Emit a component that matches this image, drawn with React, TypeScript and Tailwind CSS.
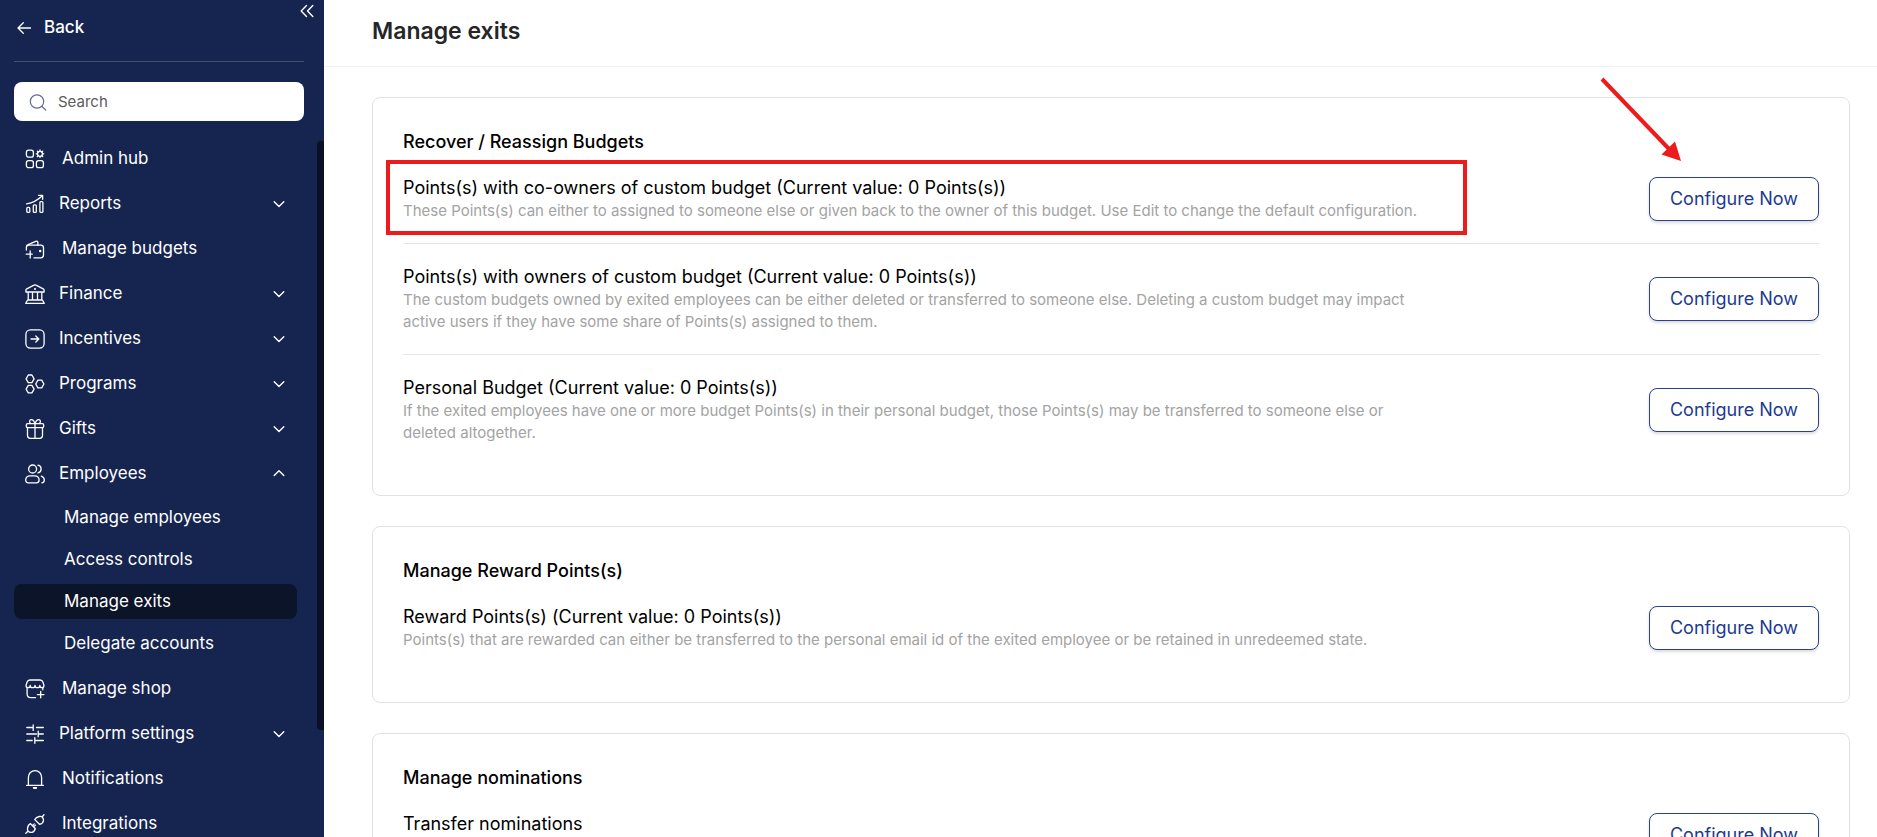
import { useState } from "react";
import type { ReactNode } from "react";
import { clsx } from "clsx";

type NavChild = { label: string; active?: boolean };
type NavItem = { label: string; icon: ReactNode; expandable?: boolean; children?: NavChild[] };
type BudgetRow = { title: string; description?: string; highlighted?: boolean };
type Section = { heading: string; rows: BudgetRow[] };

function Icon({ children }: { children: ReactNode }) {
  return (
    <svg
      viewBox="0 0 20 20"
      className="size-5 shrink-0 overflow-visible"
      fill="none"
      stroke="currentColor"
      strokeWidth="1.3"
      strokeLinecap="round"
      strokeLinejoin="round"
      aria-hidden="true"
    >
      {children}
    </svg>
  );
}

const icons = {
  hub: (
    <Icon>
      <rect x="1.4" y="1.2" width="7" height="7" rx="2.2" />
      <rect x="1.4" y="11.6" width="7" height="7" rx="2.2" />
      <rect x="11.4" y="11.6" width="7" height="7" rx="2.2" />
      <circle cx="15" cy="4.8" r="2.5" />
      <path d="M15 1v1.2M15 7.4v1.2M11.2 4.8h1.2M17.6 4.8h1.2M12.3 2.1l.9.9M16.8 6.6l.9.9M17.7 2.1l-.9.9M13.2 6.6l-.9.9" />
    </Icon>
  ),
  reports: (
    <Icon>
      <rect x="1.8" y="13.4" width="3" height="5" rx="1" />
      <rect x="8.3" y="10.8" width="3" height="7.6" rx="1" />
      <rect x="14.9" y="7.6" width="3" height="10.8" rx="1" />
      <path d="M1.6 9.8C7 9 12.4 6.500 17 2M13.6 1.300h4v4" />
    </Icon>
  ),
  budgets: (
    <Icon>
      <path d="M1.400 11V8.400a2.200 2.200 0 0 1 2.200-2.200h12.200a2.700 2.700 0 0 1 2.700 2.700v7.200a2.700 2.700 0 0 1-2.700 2.700H9" />
      <path d="M1.400 8c0-1.200.6-1.900 1.700-2.300l7.600-3.400c1.200-.5 2.200.2 2.200 1.400v2.500M1.200 15.200h6M5.200 12v7" />
      <circle cx="15.200" cy="12" r=".6" fill="currentColor" />
    </Icon>
  ),
  finance: (
    <Icon>
      <path d="M.9 8V6.200c0-.7.3-1.100.9-1.400L9 1.100c.7-.4 1.300-.4 2 0l7.200 3.700c.6.300.9.700.9 1.400V8zM3.200 8v8M7.500 8v8M12.500 8v8M16.800 8v8M2.600 16h14.800l1.900 3.300H.7z" />
      <circle cx="10" cy="5" r=".4" fill="currentColor" />
    </Icon>
  ),
  incentives: (
    <Icon>
      <rect x=".9" y=".9" width="18.200" height="18.200" rx="4.500" />
      <path d="M6 10h7.500M10.800 7l3 3-3 3" />
    </Icon>
  ),
  programs: (
    <Icon>
      <path d="M3.300 1h3.600l2.200 3.800-2.200 3.800H3.300L1.100 4.800zM3.300 11.300h3.600l2.200 3.800-2.200 3.800H3.300l-2.200-3.800zM12.900 6.200h3.800l2.200 3.800-2.200 3.800h-3.800L10.700 10z" />
    </Icon>
  ),
  gifts: (
    <Icon>
      <rect x="1.300" y="4.600" width="17.400" height="4" rx="1.400" />
      <path d="M2.500 8.600v8c0 1.700 1 2.800 2.700 2.800h9.600c1.700 0 2.700-1.100 2.700-2.800v-8M10 4.600v14.800" />
      <path d="M10 4.600C9 1.800 7.400.2 5.800.700 4 1.300 4.300 4 6 4.600M10 4.600c1-2.800 2.600-4.400 4.200-3.900 1.800.6 1.500 3.300-.2 3.900" />
    </Icon>
  ),
  employees: (
    <Icon>
      <circle cx="7.600" cy="5" r="4" />
      <path d="M13 1.100a4 4 0 0 1 0 7.800" />
      <path d="M.7 16c0-2.200 1.800-4.200 4.300-4.200h4.800c2.500 0 4.300 2 4.300 4.200 0 1.600-.9 2.800-2.500 2.800H3.200C1.600 18.800.7 17.600.7 16zM16.300 12.200c1.800.6 3 2.200 3 3.900 0 1.700-.9 2.700-2.500 2.700" />
    </Icon>
  ),
  shop: (
    <Icon>
      <path d="M1 6.600 2 3.200C2.500 1.600 3.400 1 5 1h10c1.600 0 2.500.6 3 2.200l1 3.400M1 6.600c0 1.400.7 2.100 1.700 2.100S5.200 8 5.200 6.400c0 1.600 1.200 2.300 2.400 2.300S10 8 10 6.400c0 1.600 1.200 2.300 2.400 2.300s2.400-.7 2.400-2.300c0 1.600 1.300 2.300 2.500 2.300s1.700-.7 1.700-2.100" />
      <path d="M2.100 8.800v6c0 2.600 1.300 3.900 3.900 3.900h4.500M17.800 8.800v2M15.700 12.300v6.500M12.400 15.600h6.500" />
    </Icon>
  ),
  settings: (
    <Icon>
      <path d="M1.800 3.500h6.400M8.200.8v5.600M11.500 3.500h6.800M1.800 10h9.600M13.200 7.200v5.600M13.200 10h5.100M1.800 16.500h5.400M9.800 13.700v5.600M9.800 16.500h8.500" />
    </Icon>
  ),
  notifications: (
    <Icon>
      <path d="M1.600 16.300h16.800M3.400 16.300V8.200a6.600 6.600 0 0 1 13.200 0v8.100" />
      <path d="M8.500 18.700h3c-.3 1-2.700 1-3 0z" fill="currentColor" />
    </Icon>
  ),
  integrations: (
    <Icon>
      <path d="m9.800 5.600 4.700 4.700c2.200-.5 3.600-1.700 3.900-3.500.2-1.300-.1-2.500-.8-3.300s-2-1.200-3.300-1c-1.900.3-3.700 1.200-4.500 3.100zM17 3l2-2.200" />
      <path d="M5.500 9.700l4.800 4.800c-.6 2.200-1.800 3.600-3.600 3.900-1.300.2-2.500-.1-3.300-.9s-1.100-1.900-.9-3.200c.3-1.900 1.100-3.900 3-4.600zM3 17 .8 19.200M7.500 11.600l1.800-1.700M8.700 12.800l1.800-1.700" />
    </Icon>
  ),
};

const navItems: NavItem[] = [
  { label: "Admin hub", icon: icons.hub },
  { label: "Reports", icon: icons.reports, expandable: true },
  { label: "Manage budgets", icon: icons.budgets },
  { label: "Finance", icon: icons.finance, expandable: true },
  { label: "Incentives", icon: icons.incentives, expandable: true },
  { label: "Programs", icon: icons.programs, expandable: true },
  { label: "Gifts", icon: icons.gifts, expandable: true },
  {
    label: "Employees",
    icon: icons.employees,
    expandable: true,
    children: [
      { label: "Manage employees" },
      { label: "Access controls" },
      { label: "Manage exits", active: true },
      { label: "Delegate accounts" },
    ],
  },
  { label: "Manage shop", icon: icons.shop },
  { label: "Platform settings", icon: icons.settings, expandable: true },
  { label: "Notifications", icon: icons.notifications },
  { label: "Integrations", icon: icons.integrations },
];

const sections: Section[] = [
  {
    heading: "Recover / Reassign Budgets",
    rows: [
      {
        title: "Points(s) with co-owners of custom budget (Current value: 0 Points(s))",
        description:
          "These Points(s) can either to assigned to someone else or given back to the owner of this budget. Use Edit to change the default configuration.",
        highlighted: true,
      },
      {
        title: "Points(s) with owners of custom budget (Current value: 0 Points(s))",
        description:
          "The custom budgets owned by exited employees can be either deleted or transferred to someone else. Deleting a custom budget may impact active users if they have some share of Points(s) assigned to them.",
      },
      {
        title: "Personal Budget (Current value: 0 Points(s))",
        description:
          "If the exited employees have one or more budget Points(s) in their personal budget, those Points(s) may be transferred to someone else or deleted altogether.",
      },
    ],
  },
  {
    heading: "Manage Reward Points(s)",
    rows: [
      {
        title: "Reward Points(s) (Current value: 0 Points(s))",
        description:
          "Points(s) that are rewarded can either be transferred to the personal email id of the exited employee or be retained in unredeemed state.",
      },
    ],
  },
  { heading: "Manage nominations", rows: [{ title: "Transfer nominations" }] },
];

function Chevron({ open }: { open: boolean }) {
  return (
    <svg
      viewBox="0 0 12 12"
      className="ml-auto size-3"
      fill="none"
      stroke="currentColor"
      strokeWidth="1.4"
      strokeLinecap="round"
      strokeLinejoin="round"
      aria-hidden="true"
    >
      <path d={open ? "M1.200 7.500 6 2.800l4.800 4.700" : "M1.200 3.800 6 8.500l4.800-4.700"} />
    </svg>
  );
}

function NavEntry({ item }: { item: NavItem }) {
  const [open, setOpen] = useState(Boolean(item.children));

  if (!item.expandable) {
    return (
      <li>
        <a href="#" className="flex h-[45px] items-center gap-[17px] pl-[11px]">
          {item.icon}
          {item.label}
        </a>
      </li>
    );
  }

  return (
    <li>
      <button
        type="button"
        aria-expanded={open}
        onClick={() => setOpen(!open)}
        className="flex h-[45px] w-full items-center gap-3.5 pr-3 pl-[11px]"
      >
        {item.icon}
        {item.label}
        <Chevron open={open} />
      </button>
      {open && item.children && (
        <ul className="flex flex-col gap-[7px] pt-1 pb-[5px]">
          {item.children.map((child) => (
            <li key={child.label}>
              <a
                href="#"
                className={clsx(
                  "flex h-[35px] items-center rounded-lg pl-[50px]",
                  child.active && "bg-[#0b1428]",
                )}
              >
                {child.label}
              </a>
            </li>
          ))}
        </ul>
      )}
    </li>
  );
}

function Sidebar() {
  return (
    <aside className="relative flex w-[324px] shrink-0 flex-col bg-[#162550] text-[17px] leading-[27px] text-white">
      <button type="button" aria-label="Collapse menu" className="absolute top-1 right-2.5">
        <svg
          viewBox="0 0 14 14"
          className="size-3.5"
          fill="none"
          stroke="currentColor"
          strokeWidth="1.4"
          strokeLinecap="round"
          strokeLinejoin="round"
          aria-hidden="true"
        >
          <path d="M6.500 1.500 1.200 7l5.300 5.500M12.800 1.500 7.500 7l5.300 5.500" />
        </svg>
      </button>

      <div className="mr-5 ml-[14px] flex h-[62px] items-start border-b border-[#454f72] pt-[14px]">
        <a href="#" className="flex items-center gap-[11px] pl-[3px] font-medium">
          <svg
            viewBox="0 0 16 16"
            className="size-4"
            fill="none"
            stroke="currentColor"
            strokeWidth="1.300"
            strokeLinecap="round"
            strokeLinejoin="round"
            aria-hidden="true"
          >
            <path d="M13.500 8H1M6.300 2.700 1 8l5.300 5.300" />
          </svg>
          Back
        </a>
      </div>

      <label className="mt-5 mr-5 ml-[14px] flex h-[39px] shrink-0 items-center gap-3 rounded-lg bg-white px-4">
        <svg
          viewBox="0 0 16 16"
          className="size-4 overflow-visible text-[#64708c]"
          fill="none"
          stroke="currentColor"
          strokeWidth="1.200"
          strokeLinecap="round"
          aria-hidden="true"
        >
          <circle cx="7" cy="7.500" r="6.700" />
          <path d="m12 12.500 3.700 3.500" />
        </svg>
        <input
          type="search"
          aria-label="Search"
          placeholder="Search"
          className="min-w-0 flex-1 bg-transparent text-[15px] text-gray-700 outline-none placeholder:text-[#5c5c5c]"
        />
      </label>

      <div className="mt-[15px] flex min-h-0 flex-1">
        <nav aria-label="Main" className="min-w-0 flex-1 overflow-hidden pr-5 pl-[14px]">
          <ul>
            {navItems.map((item) => (
              <NavEntry key={item.label} item={item} />
            ))}
          </ul>
        </nav>
        {/* scroll thumb */}
        <div className="mt-[5px] h-[84%] w-[7px] rounded-l bg-[#0a1124]" />
      </div>
    </aside>
  );
}

function SettingRow({ row }: { row: BudgetRow }) {
  return (
    <li className="flex items-center justify-between border-b border-[#e3e5e8] py-[21px] first:pt-0 last:border-b-0">
      <div className="relative min-h-[46px] w-3/4">
        <h3 className="text-[18px] leading-6 text-black">{row.title}</h3>
        {row.description && (
          <p className="pr-9 text-[15px] leading-[22px] text-[#a3a3a3]">{row.description}</p>
        )}
        {row.highlighted && (
          <div className="pointer-events-none absolute -top-4 -right-0.5 -bottom-[13px] -left-[17px] border-4 border-[#ec1c1c]" />
        )}
      </div>
      <div className="relative shrink-0">
        <button
          type="button"
          className="flex h-11 w-[170px] items-center justify-center rounded-lg border border-[#2b3f8f] bg-white pb-0.5 text-[18px] text-[#1c3a8f] shadow-[0_2px_3px_rgba(0,0,0,0.14)]"
        >
          Configure Now
        </button>
        {row.highlighted && (
          <svg
            viewBox="0 0 82 84"
            className="pointer-events-none absolute right-[137px] bottom-[60px] h-[84px] w-[82px]"
            aria-hidden="true"
          >
            <path d="M2 2 70 73" stroke="#ec1c1c" strokeWidth="4" />
            <path d="M81 84 61.500 77.500 75 64.500z" fill="#ec1c1c" />
          </svg>
        )}
      </div>
    </li>
  );
}

export default function App() {
  return (
    <div className="flex h-screen overflow-hidden bg-white font-['Inter','Liberation_Sans',sans-serif]">
      <Sidebar />
      <main className="min-w-0 flex-1 overflow-hidden">
        <header className="flex h-[67px] items-center border-b border-[#f1f1f3] px-12 pb-[5px]">
          <h1 className="text-[23px] leading-8 font-semibold text-[#262626]">Manage exits</h1>
        </header>
        <div className="flex flex-col gap-[30px] py-[30px] pr-[27px] pl-12">
          {sections.map((section) => (
            <section
              key={section.heading}
              className="rounded-lg border border-[#dfe2e6] px-[30px] pt-8 pb-[30px]"
            >
              <h2 className="mb-[22px] text-[18px] leading-6 font-medium text-black">
                {section.heading}
              </h2>
              <ul>
                {section.rows.map((row) => (
                  <SettingRow key={row.title} row={row} />
                ))}
              </ul>
            </section>
          ))}
        </div>
      </main>
    </div>
  );
}
